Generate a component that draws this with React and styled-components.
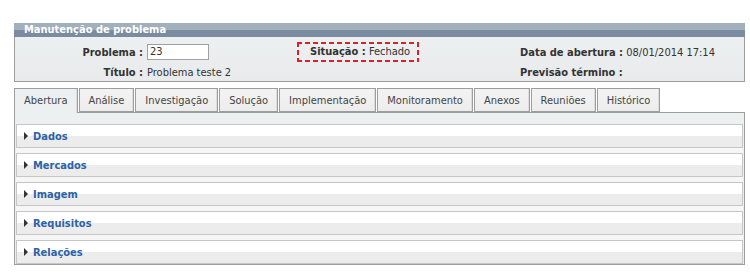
import React from 'react';
import styled, { createGlobalStyle } from 'styled-components';

const Global = createGlobalStyle`
  body {
    margin: 0;
    background: #fff;
    font-family: "DejaVu Sans Condensed", "DejaVu Sans", Verdana, sans-serif;
    font-size: 11px;
    color: #333;
  }
`

const Page = styled.div`
  padding: 23px 0 0 14px;
  width: 731px;
`
const TitleBar = styled.div`
  height: 14px;
  line-height: 14px;
  padding-left: 10px;
  color: #fff;
  font-weight: bold;
  background: linear-gradient(#a2afbd 0, #a2afbd 50%, #7b8ca1 50%, #7b8ca1 100%);
`
const Info = styled.div`
  display: grid;
  grid-template-columns: 132px 150px 223px 1fr;
  grid-template-rows: 22px 18px;
  align-items: center;
  padding-top: 4px;
  background: linear-gradient(#edf0f1, #e8eaeb);
  border: 1px solid #9d9d9d;
  border-top: none;
`
const Label = styled.span`
  font-weight: bold;
  text-align: ${p => (p.$right ? 'right' : 'left')};
  padding-right: ${p => (p.$right ? '4px' : '0')};
  white-space: nowrap;
`
const Value = styled.span`
  white-space: nowrap;
`
const Field = styled.div`
  white-space: nowrap;
`
const Input = styled.input`
  box-sizing: border-box;
  width: 62px;
  height: 16px;
  margin: -1px 0 0;
  padding: 0 2px;
  border: 1px solid #a0a0a0;
  font: inherit;
  color: #333;
  display: block;
`
const Highlight = styled.div`
  box-sizing: border-box;
  width: 122px;
  height: 20px;
  margin-top: -1px;
  padding-left: 13px;
  line-height: 20px;
  white-space: nowrap;
  background:
    repeating-linear-gradient(90deg, #e41e26 0 5px, transparent 5px 8px) top / 100% 2px no-repeat,
    repeating-linear-gradient(90deg, #e41e26 0 5px, transparent 5px 8px) bottom / 100% 2px no-repeat,
    repeating-linear-gradient(180deg, #e41e26 0 5px, transparent 5px 8px) left / 2px 100% no-repeat,
    repeating-linear-gradient(180deg, #e41e26 0 5px, transparent 5px 8px) right / 2px 100% no-repeat;
`
const Tabs = styled.div`
  display: flex;
  gap: 1px;
  margin-top: 6px;
  position: relative;
  z-index: 1;
`
const Tab = styled.div`
  box-sizing: border-box;
  height: ${p => (p.$active ? '25px' : '24px')};
  line-height: 23px;
  padding: 0 9px;
  border: 1px solid #9d9d9d;
  border-bottom: ${p => (p.$active ? 'none' : '1px solid #9d9d9d')};
  background: ${p => (p.$active ? '#edf0f1' : 'linear-gradient(#f3f3f3, #ededed)')};
  box-shadow: inset -1px 0 0 #dcdcdc;
  color: #444;
  white-space: nowrap;
`
const Panel = styled.div`
  margin-top: -1px;
  border: 1px solid #9d9d9d;
  background: #edf0f1;
  padding: 11px 1px 0;
`
const Sections = styled.div`
  display: flex;
  flex-direction: column;
  gap: 5px;
  background: #f6f6f6;
`
const Section = styled.div`
  box-sizing: border-box;
  height: 24px;
  display: flex;
  align-items: center;
  gap: 5px;
  padding-left: 7px;
  border: 1px solid #c6c6c6;
  background: linear-gradient(#fff 0, #fff 50%, #ececec 50%, #ececec 100%);
  color: #2b62a8;
  font-weight: bold;
  cursor: pointer;
`
const Arrow = styled.span`
  width: 0;
  height: 0;
  border-left: 4px solid #333;
  border-top: 4px solid transparent;
  border-bottom: 4px solid transparent;
`

const tabs = ['Abertura', 'Análise', 'Investigação', 'Solução', 'Implementação', 'Monitoramento', 'Anexos', 'Reuniões', 'Histórico']
const sections = ['Dados', 'Mercados', 'Imagem', 'Requisitos', 'Relações']

export default function App() {
  return (
    <Page>
      <Global />
      <TitleBar>Manutenção de problema</TitleBar>
      <Info>
        <Label $right>Problema :</Label>
        <Field><Input defaultValue="23" /></Field>
        <Highlight><Label>Situação :</Label> <Value>Fechado</Value></Highlight>
        <Field><Label>Data de abertura :</Label> <Value>08/01/2014 17:14</Value></Field>
        <Label $right>Título :</Label>
        <Value>Problema teste 2</Value>
        <span />
        <Field><Label>Previsão término :</Label></Field>
      </Info>
      <Tabs>
        {tabs.map((t, i) => (
          <Tab key={t} $active={i === 0}>{t}</Tab>
        ))}
      </Tabs>
      <Panel>
        <Sections>
          {sections.map(s => (
            <Section key={s}><Arrow />{s}</Section>
          ))}
        </Sections>
      </Panel>
    </Page>
  )
}
